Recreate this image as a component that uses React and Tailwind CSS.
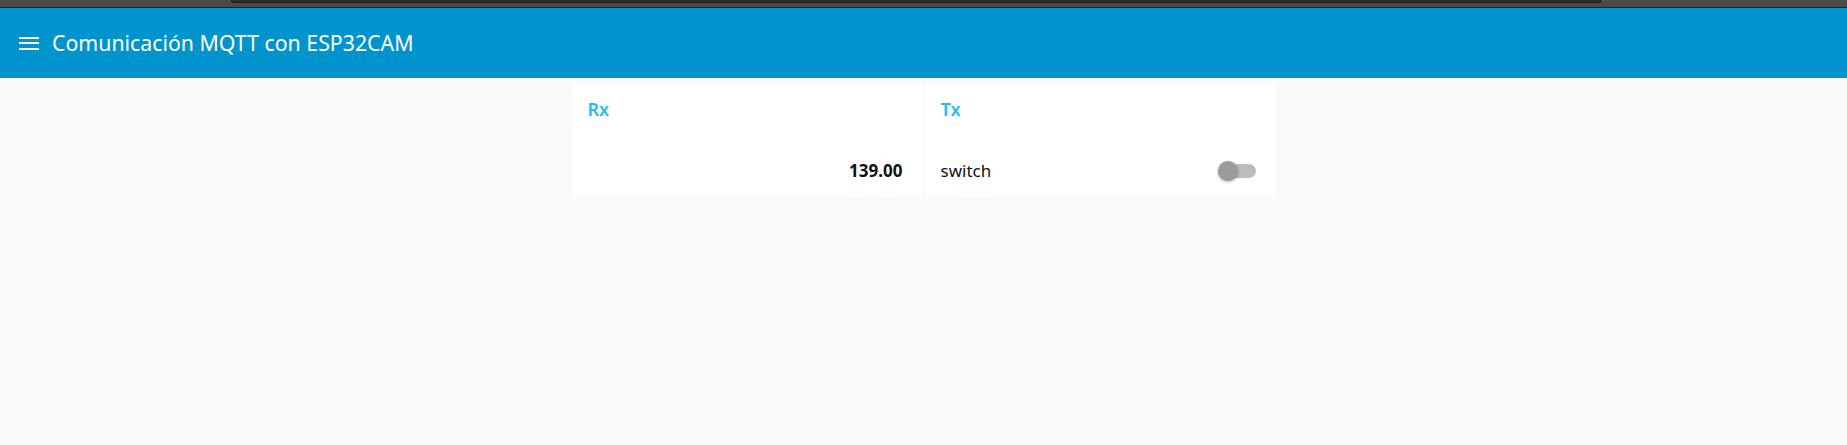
import React, { useState } from 'react';

const Card = ({ title, children }) => (
  <div className="w-[349px] h-[113px] bg-white pt-[11px] pb-[9px]">
    <div className="h-[28px] px-[15px] flex items-center text-[18px] font-semibold text-[#1bbfff] leading-none">
      {title}
    </div>
    <div className="mt-[30px] h-[36px] pl-[15px] pr-[19px] flex items-center">
      {children}
    </div>
  </div>
);

const App = () => {
  const [on, setOn] = useState(false);

  return (
    <div className="min-h-[445px] bg-[#fafafa]" style={{ fontFamily: '"Noto Sans", "Open Sans", sans-serif' }}>
      {/* window strip */}
      <div className="h-[8px] bg-[#4a4a4a] flex border-b border-[#262626]">
        <div className="w-[231px]" />
        <div className="w-[1370px] h-[3px] bg-[#2e2e2e] border-b border-l border-r border-[#1f1f1f] rounded-bl-[2px] rounded-br-[2px]" />
      </div>

      {/* toolbar */}
      <div className="h-[70px] bg-[#0094ce] flex items-center text-white">
        <button className="ml-[19px] w-[20px] flex flex-col gap-[3.5px]">
          <span className="block h-[2px] bg-white" />
          <span className="block h-[2px] bg-white" />
          <span className="block h-[2px] bg-white" />
        </button>
        <h1 className="ml-[13px] text-[21.3px] leading-none">Comunicación MQTT con ESP32CAM</h1>
      </div>

      {/* groups */}
      <div className="flex justify-center gap-[4px] pt-[6px]">
        <Card title="Rx">
          <div className="w-full text-right text-[17px] font-bold text-[#111]">139.00</div>
        </Card>
        <Card title="Tx">
          <div className="flex-1 text-[17px] text-[#111]">switch</div>
          <button onClick={() => setOn(!on)} className="relative w-[38px] h-[22px] flex items-center">
            <span className={`block ml-[2px] w-[36px] h-[14px] rounded-full ${on ? 'bg-[#7fd3f5]' : 'bg-[#bdbdbd]'}`} />
            <span
              className={`absolute top-[1px] w-[20px] h-[20px] rounded-full shadow-[0_1px_3px_rgba(0,0,0,0.35)] ${on ? 'left-[18px] bg-[#0094ce]' : 'left-0 bg-[#9b9b9b]'}`}
            />
          </button>
        </Card>
      </div>
    </div>
  );
};

export default App;
